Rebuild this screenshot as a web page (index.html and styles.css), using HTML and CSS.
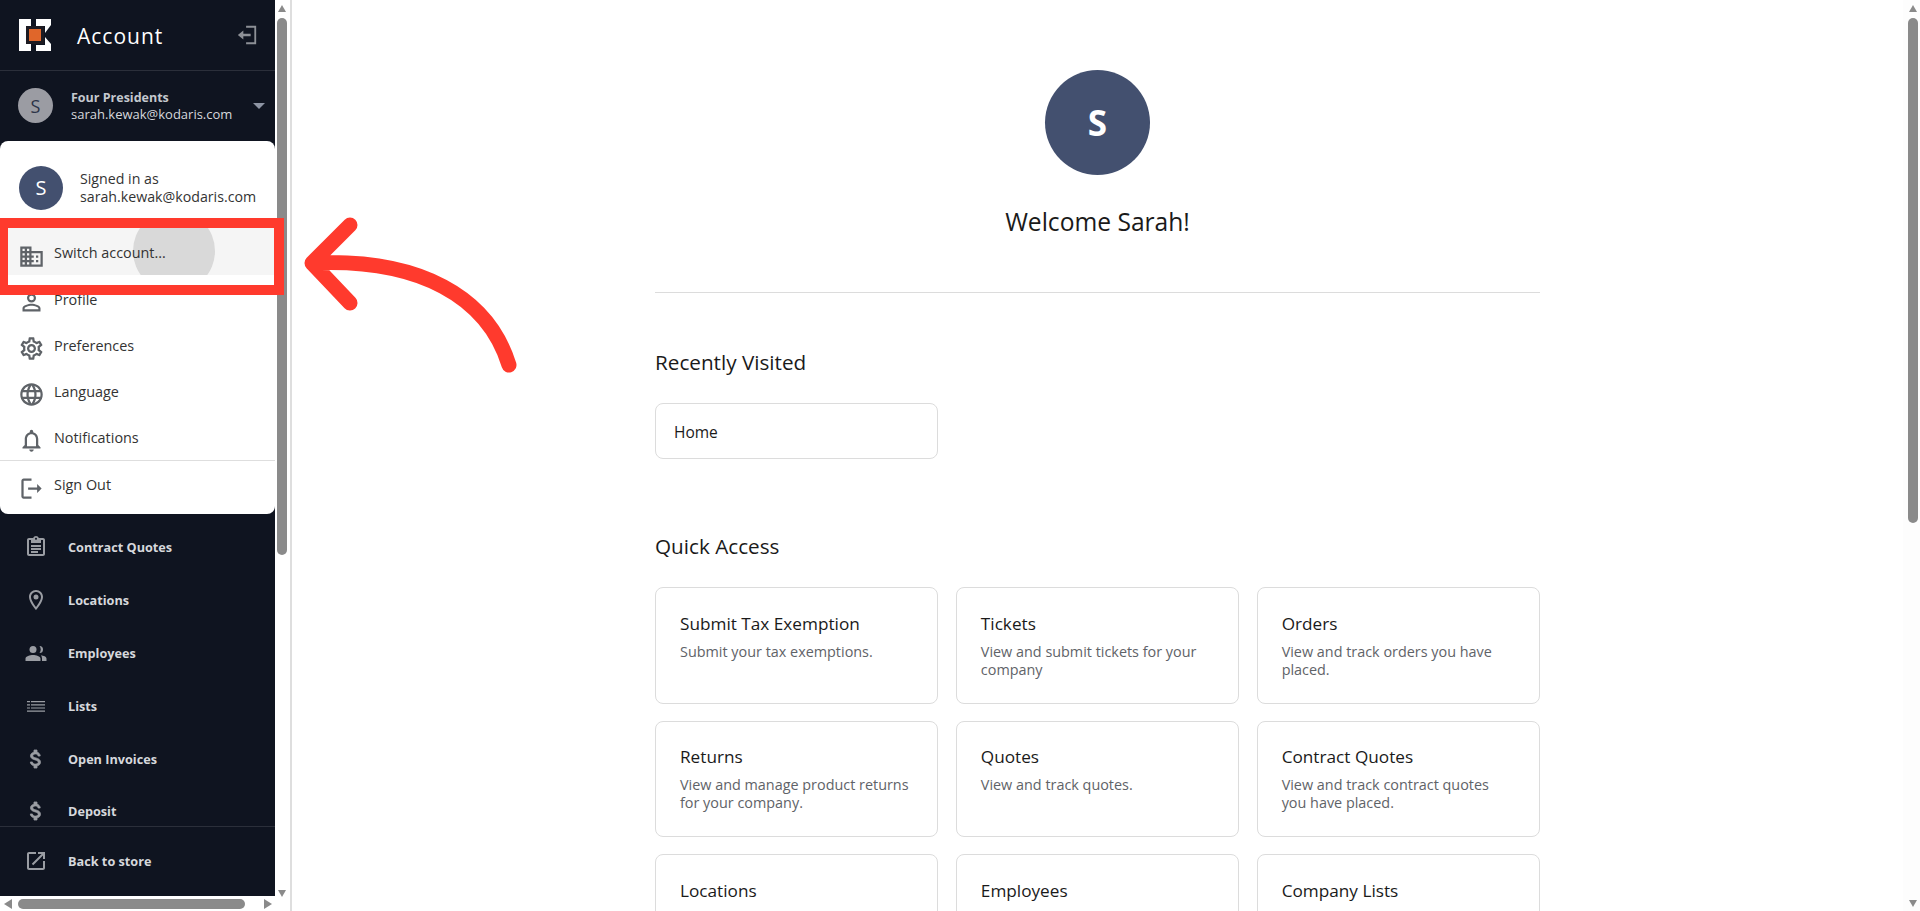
FILE: index.html
```html
<!DOCTYPE html>
<html lang="en">
<head>
    <meta charset="UTF-8">
    <meta name="viewport" content="width=device-width, initial-scale=1.0">
    <title>Account</title>
    <link rel="stylesheet" href="styles.css">
</head>
<body>
    <div class="side-wrap">
        <aside class="sidebar">
            <div class="side-head">
                <svg class="logo" viewBox="0 0 32 32">
                    <path fill="#fff" d="M0 0H12V7H7V25H12V32H0ZM17 0H32V6L26 14V18L32 25V32H17V26H26V7H17Z"/>
                    <rect x="8.5" y="8.5" width="15" height="15" fill="#e0662a" stroke="#1d1b22" stroke-width="3"/>
                </svg>
                <span class="side-title">Account</span>
                <svg class="collapse-icon" viewBox="0 0 24 24"><path fill="none" stroke="#8d9096" stroke-width="2" d="M11 3H21V21H11"/><path fill="#8d9096" d="M2 12l6-5v3.6h8v2.8H8V17z"/></svg>
            </div>
            <div class="user-row">
                <div class="avatar-small">S</div>
                <div class="user-text">
                    <div class="user-name">Four Presidents</div>
                    <div class="user-mail">sarah.kewak@kodaris.com</div>
                </div>
                <div class="caret"></div>
            </div>
            <nav class="nav-list">
                <a class="nav-item"><svg viewBox="0 0 24 24"><path d="M19 3h-4.18C14.4 1.84 13.3 1 12 1s-2.4.84-2.82 2H5c-1.1 0-2 .9-2 2v14c0 1.1.9 2 2 2h14c1.1 0 2-.9 2-2V5c0-1.1-.9-2-2-2zm-7-.25c.55 0 1 .45 1 1s-.45 1-1 1-1-.45-1-1 .45-1 1-1zM19 19H5V5h2v3h10V5h2v14zM7 10h10v2H7zm0 3h10v2H7zm0 3h7v2H7z"/></svg>Contract Quotes</a>
                <a class="nav-item"><svg viewBox="0 0 24 24"><path d="M12 2C8.1 2 5 5.1 5 9c0 5.2 7 13 7 13s7-7.8 7-13c0-3.9-3.1-7-7-7zm0 17C10 16.3 7 11.9 7 9c0-2.8 2.2-5 5-5s5 2.2 5 5c0 2.9-3 7.3-5 10z"/><circle cx="12" cy="9" r="2.5"/></svg>Locations</a>
                <a class="nav-item"><svg viewBox="0 0 24 24"><circle cx="9" cy="8.5" r="3.5"/><path d="M15.500 5a3.500 3.500 0 0 1 0 7 6 6 0 0 0 0-7zM9 14c-3 0-7.500 1.300-7.500 3.500V20h15v-2.500C16.500 15.300 12 14 9 14zM17 14.200c2.500.4 5.500 1.500 5.500 3.300V20H18v-2.500c0-1.300-.4-2.400-1-3.300z"/></svg>Employees</a>
                <a class="nav-item"><svg class="list-icon" viewBox="0 0 24 24"><path d="M3 7h3v1.200H3zM7 7h14v1.200H7zM3 10.200h3v1.200H3zM7 10.200h14v1.200H7zM3 13.400h3v1.200H3zM7 13.400h14v1.200H7zM3 16.600h18v1.200H3z"/></svg>Lists</a>
                <a class="nav-item"><svg class="money-icon" viewBox="0 0 24 24"><path d="M11.800 10.900c-2.270-.59-3-1.200-3-2.150 0-1.090 1.010-1.850 2.700-1.850 1.780 0 2.440.85 2.500 2.100h2.210c-.07-1.720-1.120-3.300-3.210-3.810V3h-3v2.160c-1.940.42-3.500 1.680-3.500 3.610 0 2.310 1.910 3.460 4.700 4.130 2.500.6 3 1.480 3 2.410 0 .69-.49 1.790-2.700 1.790-2.060 0-2.870-.92-2.980-2.100h-2.200c.12 2.190 1.760 3.420 3.680 3.830V21h3v-2.150c1.950-.37 3.500-1.500 3.500-3.550 0-2.840-2.430-3.810-4.700-4.400z"/></svg>Open Invoices</a>
                <a class="nav-item"><svg class="money-icon" viewBox="0 0 24 24"><path d="M11.800 10.900c-2.270-.59-3-1.200-3-2.150 0-1.090 1.010-1.850 2.700-1.850 1.780 0 2.440.85 2.500 2.100h2.210c-.07-1.720-1.120-3.300-3.210-3.810V3h-3v2.160c-1.940.42-3.500 1.680-3.500 3.610 0 2.310 1.910 3.460 4.700 4.130 2.500.6 3 1.480 3 2.410 0 .69-.49 1.790-2.700 1.790-2.060 0-2.870-.92-2.980-2.100h-2.200c.12 2.190 1.760 3.420 3.680 3.830V21h3v-2.150c1.950-.37 3.500-1.500 3.500-3.550 0-2.840-2.430-3.810-4.700-4.400z"/></svg>Deposit</a>
            </nav>
            <div class="side-foot">
                <a class="nav-item"><svg viewBox="0 0 24 24"><path d="M19 19H5V5h7V3H5c-1.100 0-2 .9-2 2v14c0 1.100.9 2 2 2h14c1.100 0 2-.9 2-2v-7h-2v7zM14 3v2h3.600l-9.800 9.800 1.400 1.400L19 6.400V10h2V3h-7z"/></svg>Back to store</a>
            </div>

            <!-- account menu, open over the nav -->
            <div class="account-menu">
                <div class="menu-user">
                    <div class="avatar-menu">S</div>
                    <div class="menu-user-text">Signed in as<br>sarah.kewak@kodaris.com</div>
                </div>
                <a class="menu-item menu-item-active">
                    <span class="ripple"></span>
                    <svg viewBox="0 0 24 24"><path d="M12 7V3H2v18h20V7H12zM6 19H4v-2h2v2zm0-4H4v-2h2v2zm0-4H4V9h2v2zm0-4H4V5h2v2zm4 12H8v-2h2v2zm0-4H8v-2h2v2zm0-4H8V9h2v2zm0-4H8V5h2v2zm10 12h-8v-2h2v-2h-2v-2h2v-2h-2V9h8v10zm-2-8h-2v2h2v-2zm0 4h-2v2h2v-2z"/></svg>
                    <span class="menu-label">Switch account...</span>
                </a>
                <a class="menu-item"><svg viewBox="0 0 24 24"><path d="M12 5.900a2.100 2.100 0 1 1 0 4.200 2.100 2.100 0 0 1 0-4.200m0 9c2.970 0 6.100 1.460 6.100 2.100v1.100H5.900V17c0-.64 3.130-2.100 6.100-2.100M12 4C9.790 4 8 5.790 8 8s1.790 4 4 4 4-1.790 4-4-1.790-4-4-4zm0 9c-2.670 0-8 1.340-8 4v3h16v-3c0-2.660-5.330-4-8-4z"/></svg><span class="menu-label">Profile</span></a>
                <a class="menu-item"><svg viewBox="0 0 24 24"><path d="M19.430 12.980c.04-.32.07-.64.07-.98s-.03-.66-.07-.98l2.110-1.650c.19-.15.24-.42.12-.64l-2-3.460c-.12-.22-.39-.3-.61-.22l-2.490 1c-.52-.4-1.080-.73-1.690-.98l-.38-2.650A.488.488 0 0 0 14 2h-4c-.25 0-.46.18-.49.42l-.38 2.650c-.61.25-1.170.59-1.690.98l-2.490-1a.566.566 0 0 0-.18-.03c-.17 0-.34.09-.43.25l-2 3.460c-.13.22-.07.49.12.64l2.110 1.650c-.04.32-.07.65-.07.98s.03.66.07.98l-2.110 1.650c-.19.15-.24.42-.12.64l2 3.460c.12.22.39.3.61.22l2.490-1c.52.4 1.080.73 1.690.98l.38 2.650c.03.24.24.42.49.42h4c.25 0 .46-.18.49-.42l.38-2.650c.61-.25 1.170-.59 1.690-.98l2.490 1c.06.02.12.03.18.03.17 0 .34-.09.43-.25l2-3.460c.12-.22.07-.49-.12-.64l-2.110-1.650zm-1.980-1.710c.04.31.05.52.05.73 0 .21-.02.43-.05.73l-.14 1.130.89.7 1.080.84-.7 1.210-1.270-.51-1.040-.42-.9.680c-.43.32-.84.56-1.250.73l-1.060.43-.16 1.130-.2 1.350h-1.400l-.19-1.350-.16-1.130-1.060-.43c-.43-.18-.83-.41-1.230-.71l-.91-.7-1.060.43-1.270.51-.7-1.210 1.080-.84.89-.7-.14-1.130c-.03-.31-.05-.54-.05-.74s.02-.43.05-.73l.14-1.130-.89-.7-1.080-.84.7-1.210 1.270.51 1.040.42.9-.68c.43-.32.84-.56 1.250-.73l1.060-.43.16-1.130.2-1.350h1.390l.19 1.350.16 1.130 1.060.43c.43.18.83.41 1.230.71l.91.7 1.060-.43 1.270-.51.7 1.210-1.070.85-.89.7.14 1.130zM12 8c-2.210 0-4 1.790-4 4s1.790 4 4 4 4-1.790 4-4-1.790-4-4-4zm0 6c-1.100 0-2-.9-2-2s.9-2 2-2 2 .9 2 2-.9 2-2 2z"/></svg><span class="menu-label">Preferences</span></a>
                <a class="menu-item"><svg viewBox="0 0 24 24"><path d="M11.990 2C6.470 2 2 6.480 2 12s4.470 10 9.990 10C17.520 22 22 17.520 22 12S17.520 2 11.990 2zm6.930 6h-2.950a15.650 15.650 0 0 0-1.380-3.560A8.030 8.030 0 0 1 18.920 8zM12 4.040c.83 1.200 1.480 2.530 1.910 3.960h-3.820c.43-1.430 1.080-2.760 1.910-3.960zM4.260 14C4.100 13.360 4 12.690 4 12s.1-1.360.26-2h3.380c-.08.66-.14 1.320-.14 2s.06 1.340.14 2H4.260zm.82 2h2.950c.32 1.250.78 2.450 1.380 3.560A7.987 7.987 0 0 1 5.080 16zm2.950-8H5.080a7.987 7.987 0 0 1 4.330-3.560A15.650 15.650 0 0 0 8.030 8zM12 19.960c-.83-1.200-1.480-2.530-1.910-3.960h3.820c-.43 1.430-1.080 2.760-1.910 3.960zM14.340 14H9.660c-.09-.66-.16-1.320-.16-2s.07-1.350.16-2h4.680c.09.65.16 1.320.16 2s-.07 1.340-.16 2zm.25 5.560c.6-1.110 1.060-2.310 1.380-3.560h2.950a8.030 8.030 0 0 1-4.330 3.560zM16.360 14c.08-.66.14-1.320.14-2s-.06-1.340-.14-2h3.380c.16.64.26 1.310.26 2s-.1 1.360-.26 2h-3.380z"/></svg><span class="menu-label">Language</span></a>
                <a class="menu-item"><svg viewBox="0 0 24 24"><path d="M12 22c1.100 0 2-.9 2-2h-4c0 1.100.9 2 2 2zm6-6v-5c0-3.070-1.630-5.640-4.500-6.320V4c0-.83-.67-1.500-1.500-1.500s-1.500.67-1.500 1.500v.68C7.640 5.360 6 7.920 6 11v5l-2 2v1h16v-1l-2-2zm-2 1H8v-6c0-2.480 1.510-4.500 4-4.500s4 2.020 4 4.500v6z"/></svg><span class="menu-label">Notifications</span></a>
                <a class="menu-item menu-item-last"><svg viewBox="0 0 24 24"><path d="M5 5h7V3H5c-1.100 0-2 .9-2 2v14c0 1.100.9 2 2 2h7v-2H5V5zm16 7l-4-4v3H9v2h8v3l4-4z"/></svg><span class="menu-label">Sign Out</span></a>
            </div>
        </aside>
        <div class="scroll-v">
            <span class="arrow-up"></span>
            <span class="thumb-v thumb-side"></span>
            <span class="arrow-down"></span>
        </div>
        <div class="scroll-h">
            <span class="arrow-left"></span>
            <span class="thumb-h"></span>
            <span class="arrow-right"></span>
        </div>
    </div>

    <main class="main">
        <div class="content">
            <div class="welcome">
                <div class="avatar-big">S</div>
                <h1>Welcome Sarah!</h1>
            </div>

            <h2 class="recent-title">Recently Visited</h2>
            <div class="card-grid">
                <div class="recent-card">Home</div>
            </div>

            <h2 class="quick-title">Quick Access</h2>
            <div class="card-grid">
                <div class="card"><h3>Submit Tax Exemption</h3><p>Submit your tax exemptions.</p></div>
                <div class="card"><h3>Tickets</h3><p>View and submit tickets for your company</p></div>
                <div class="card"><h3>Orders</h3><p>View and track orders you have placed.</p></div>
                <div class="card"><h3>Returns</h3><p>View and manage product returns for your company.</p></div>
                <div class="card"><h3>Quotes</h3><p>View and track quotes.</p></div>
                <div class="card"><h3>Contract Quotes</h3><p>View and track contract quotes you have placed.</p></div>
                <div class="card"><h3>Locations</h3></div>
                <div class="card"><h3>Employees</h3></div>
                <div class="card"><h3>Company Lists</h3></div>
            </div>
        </div>
    </main>

    <div class="scroll-v scroll-page">
        <span class="arrow-up"></span>
        <span class="thumb-v thumb-page"></span>
        <span class="arrow-down"></span>
    </div>

    <!-- annotation drawn over the screenshot -->
    <div class="mark-box"></div>
    <svg class="mark-arrow" viewBox="0 0 240 180">
        <path d="M209 153C188 85 120 46 12 51M50 13L12 51L50 91"/>
    </svg>
</body>
</html>
```

FILE: styles.css
```css
/* General Styling */
* {
    box-sizing: border-box;
}

body {
    display: flex;
    margin: 0;
    height: 911px;
    overflow: hidden;
    background-color: white;
    color: #1a1a1a;
    font-family: "Open Sans", "Noto Sans", sans-serif;
}

/* Sidebar */
.side-wrap {
    display: grid;
    grid-template-columns: 275px 15px;
    grid-template-rows: 896px 15px;
    flex: none;
    width: 292px;
    border-right: 2px solid #dedede;
}

.sidebar {
    position: relative;
    display: flex;
    flex-direction: column;
    background-color: #0f1420;
    color: #d6d8dc;
}

.side-head {
    display: flex;
    align-items: center;
    flex: none;
    height: 71px;
    padding: 0 17px 0 19px;
    border-bottom: 1px solid #2b2f3a;
}

.logo {
    width: 32px;
    height: 32px;
}

.side-title {
    flex: 1;
    margin-left: 26px;
    padding-top: 2px;
    color: #fff;
    font-size: 21px;
    letter-spacing: 1px;
}

.collapse-icon {
    width: 22px;
    height: 22px;
}

.user-row {
    display: flex;
    align-items: center;
    flex: none;
    height: 69px;
    padding: 0 10px 0 18px;
}

.avatar-small {
    display: flex;
    align-items: center;
    justify-content: center;
    flex: none;
    width: 35px;
    height: 35px;
    border-radius: 50%;
    background-color: #9b9ca3;
    color: #2c3348;
    font-size: 18px;
}

.user-text {
    flex: 1;
    margin-left: 18px;
    font-size: 13px;
    line-height: 17px;
}

.user-name {
    font-size: 12.5px;
    font-weight: 700;
    color: #c4c8ce;
}

.caret {
    width: 0;
    height: 0;
    border-left: 6px solid transparent;
    border-right: 6px solid transparent;
    border-top: 6px solid #8d94a3;
}

.nav-list {
    flex: 1;
    min-height: 0;
    padding-top: 381px;
    overflow: hidden;
}

.nav-item {
    display: flex;
    align-items: center;
    height: 52.8px;
    padding-left: 24px;
    color: #d6d8dc;
    font-size: 12.7px;
    font-weight: 700;
}

.nav-item svg {
    flex: none;
    width: 24px;
    height: 24px;
    margin-right: 20px;
    fill: #9a9da3;
}

.nav-item .money-icon {
    stroke: #9a9da3;
    stroke-width: 0.8px;
}

.side-foot {
    flex: none;
    height: 70px;
    padding-top: 8px;
    border-top: 1px solid #2b2f3a;
}

/* Account menu */
.account-menu {
    position: absolute;
    top: 141px;
    left: 0;
    width: 275px;
    height: 373px;
    overflow: hidden;
    background-color: white;
    border-radius: 8px;
    color: #333;
}

.menu-user {
    display: flex;
    align-items: center;
    height: 87px;
    padding: 6px 0 0 19px;
}

.avatar-menu {
    display: flex;
    align-items: center;
    justify-content: center;
    flex: none;
    width: 44px;
    height: 44px;
    border-radius: 50%;
    background-color: #43506f;
    color: white;
    font-size: 20px;
}

.menu-user-text {
    margin-left: 17px;
    font-size: 14.2px;
    line-height: 18px;
}

.menu-item {
    position: relative;
    display: flex;
    align-items: center;
    height: 46px;
    overflow: hidden;
    padding-left: 18px;
    font-size: 14.4px;
}

.menu-item svg {
    position: relative;
    flex: none;
    width: 27px;
    height: 27px;
    margin: 9px 9px 0 0;
    fill: #5f6368;
}

.menu-label {
    position: relative;
    margin-top: 2px;
}

.menu-item-active {
    height: 47px;
    background-color: #f5f5f5;
}

.ripple {
    position: absolute;
    top: -18px;
    left: 133px;
    width: 82px;
    height: 82px;
    border-radius: 50%;
    background-color: #d9d9d9;
}

.menu-item-last {
    margin-top: 1px;
    border-top: 1px solid #dedede;
}

/* Fake browser scrollbars */
.scroll-v {
    display: flex;
    flex-direction: column;
    align-items: center;
    grid-row: 1 / 3;
    grid-column: 2;
    width: 15px;
    padding: 5px 1px 14px 0;
    background-color: white;
}

.scroll-page {
    flex: none;
    width: 17px;
    padding: 5px 0 4px 3px;
    background-color: #fdfdfd;
}

.thumb-v {
    width: 10px;
    border-radius: 5px;
    background-color: #8a8a8a;
}

.thumb-side {
    height: 537px;
    margin: 6px 0 auto;
}

.thumb-page {
    height: 505px;
    margin: 6px 0 auto;
}

.scroll-h {
    display: flex;
    align-items: center;
    grid-row: 2;
    grid-column: 1;
    padding: 0 3px 0 4px;
    background-color: white;
}

.thumb-h {
    width: 227px;
    height: 10px;
    margin-left: 6px;
    border-radius: 5px;
    background-color: #8a8a8a;
}

.arrow-up, .arrow-down {
    width: 0;
    height: 0;
    border-left: 4.5px solid transparent;
    border-right: 4.5px solid transparent;
}

.arrow-up {
    border-bottom: 7px solid #8a8a8a;
}

.arrow-down {
    border-top: 7px solid #8a8a8a;
}

.arrow-left, .arrow-right {
    width: 0;
    height: 0;
    border-top: 5px solid transparent;
    border-bottom: 5px solid transparent;
}

.arrow-left {
    border-right: 8px solid #8a8a8a;
}

.arrow-right {
    margin-left: auto;
    border-left: 8px solid #8a8a8a;
}

/* Main content */
.main {
    flex: 1;
    min-width: 0;
    overflow: hidden;
}

.content {
    width: 885px;
    margin: 0 auto;
}

.welcome {
    display: flex;
    flex-direction: column;
    align-items: center;
    height: 293px;
    padding-top: 70px;
    border-bottom: 1px solid #dcdcdc;
}

.avatar-big {
    display: flex;
    align-items: center;
    justify-content: center;
    width: 105px;
    height: 105px;
    border-radius: 50%;
    background-color: #43506f;
    color: white;
    font-size: 35px;
    font-weight: 700;
}

h1 {
    margin: 30px 0 0;
    font-size: 24.6px;
    font-weight: 400;
    line-height: 34px;
}

h2 {
    margin: 0;
    font-size: 20.7px;
    font-weight: 400;
    line-height: 28px;
}

.recent-title {
    margin: 55px 0 27px;
}

.quick-title {
    margin: 73px 0 27px;
}

.card-grid {
    display: grid;
    grid-template-columns: repeat(3, 1fr);
    gap: 17px 17.5px;
}

.recent-card {
    display: flex;
    align-items: center;
    height: 56px;
    padding: 2px 0 0 18px;
    border: 1px solid #dcdcdc;
    border-radius: 8px;
    font-size: 15.5px;
}

.card {
    height: 116.5px;
    padding: 23.5px 24px 0;
    border: 1px solid #dcdcdc;
    border-radius: 8px;
}

h3 {
    margin: 0 0 7px;
    font-size: 17.2px;
    font-weight: 400;
    line-height: 24px;
}

.card p {
    margin: 0;
    color: #5f6368;
    font-size: 14.4px;
    line-height: 18px;
}

/* Annotation */
.mark-box {
    position: absolute;
    top: 218px;
    left: 0;
    width: 284px;
    height: 77px;
    border: 10px solid #ff3a2d;
    border-left-width: 8px;
}

.mark-arrow {
    position: absolute;
    top: 212px;
    left: 300px;
    width: 240px;
    height: 180px;
    fill: none;
    stroke: #ff3a2d;
    stroke-width: 15px;
    stroke-linecap: round;
    stroke-linejoin: round;
}
```
